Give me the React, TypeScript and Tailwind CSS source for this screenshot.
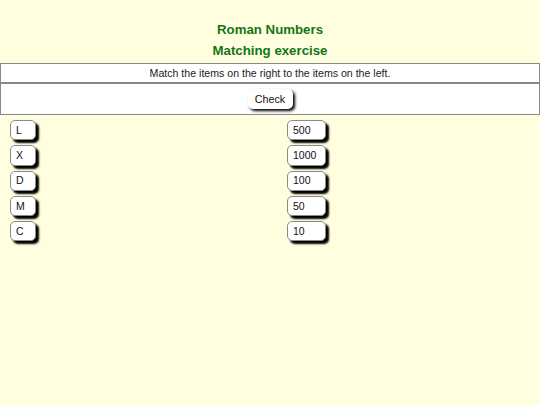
const left = ['L', 'X', 'D', 'M', 'C']
const right = ['500', '1000', '100', '50', '10']

function Item({ label, width }: { label: string; width: string }) {
  return (
    <div
      className={`h-[20.25px] ${width} flex items-center pl-[5px] pt-[1px] bg-white border border-[#8a8a8a] rounded-[5px] shadow-[3px_3px_2px_#000] text-[10.5px] text-[#111]`}
    >
      {label}
    </div>
  )
}

export default function App() {
  return (
    <div className="min-h-[405px] w-full bg-[#ffffe0] font-['Liberation_Sans',Arial,sans-serif]">
      <div className="pt-[19px] text-center font-bold text-[13.25px] text-[#147514] leading-[21px]">
        <div>Roman Numbers</div>
        <div>Matching exercise</div>
      </div>

      <div className="mt-[2px] h-[20px] pt-[1px] bg-white border border-[#888] flex items-center justify-center text-[10.6px] text-[#222]">
        Match the items on the right to the items on the left.
      </div>
      <div className="h-[32px] bg-white border border-[#888] flex items-center justify-center">
        <button className="h-[20px] w-[45px] pt-[1px] bg-white rounded-[5px] shadow-[2px_2px_3px_#000] text-[10.7px] text-[#111]">
          Check
        </button>
      </div>

      <div className="grid grid-cols-2 mt-[5px]">
        <div className="pl-[10px] flex flex-col gap-[5px]">
          {left.map(l => (
            <Item key={l} label={l} width="w-[26px]" />
          ))}
        </div>
        <div className="pl-[17px] flex flex-col gap-[5px]">
          {right.map(r => (
            <Item key={r} label={r} width="w-[39px]" />
          ))}
        </div>
      </div>
    </div>
  )
}
